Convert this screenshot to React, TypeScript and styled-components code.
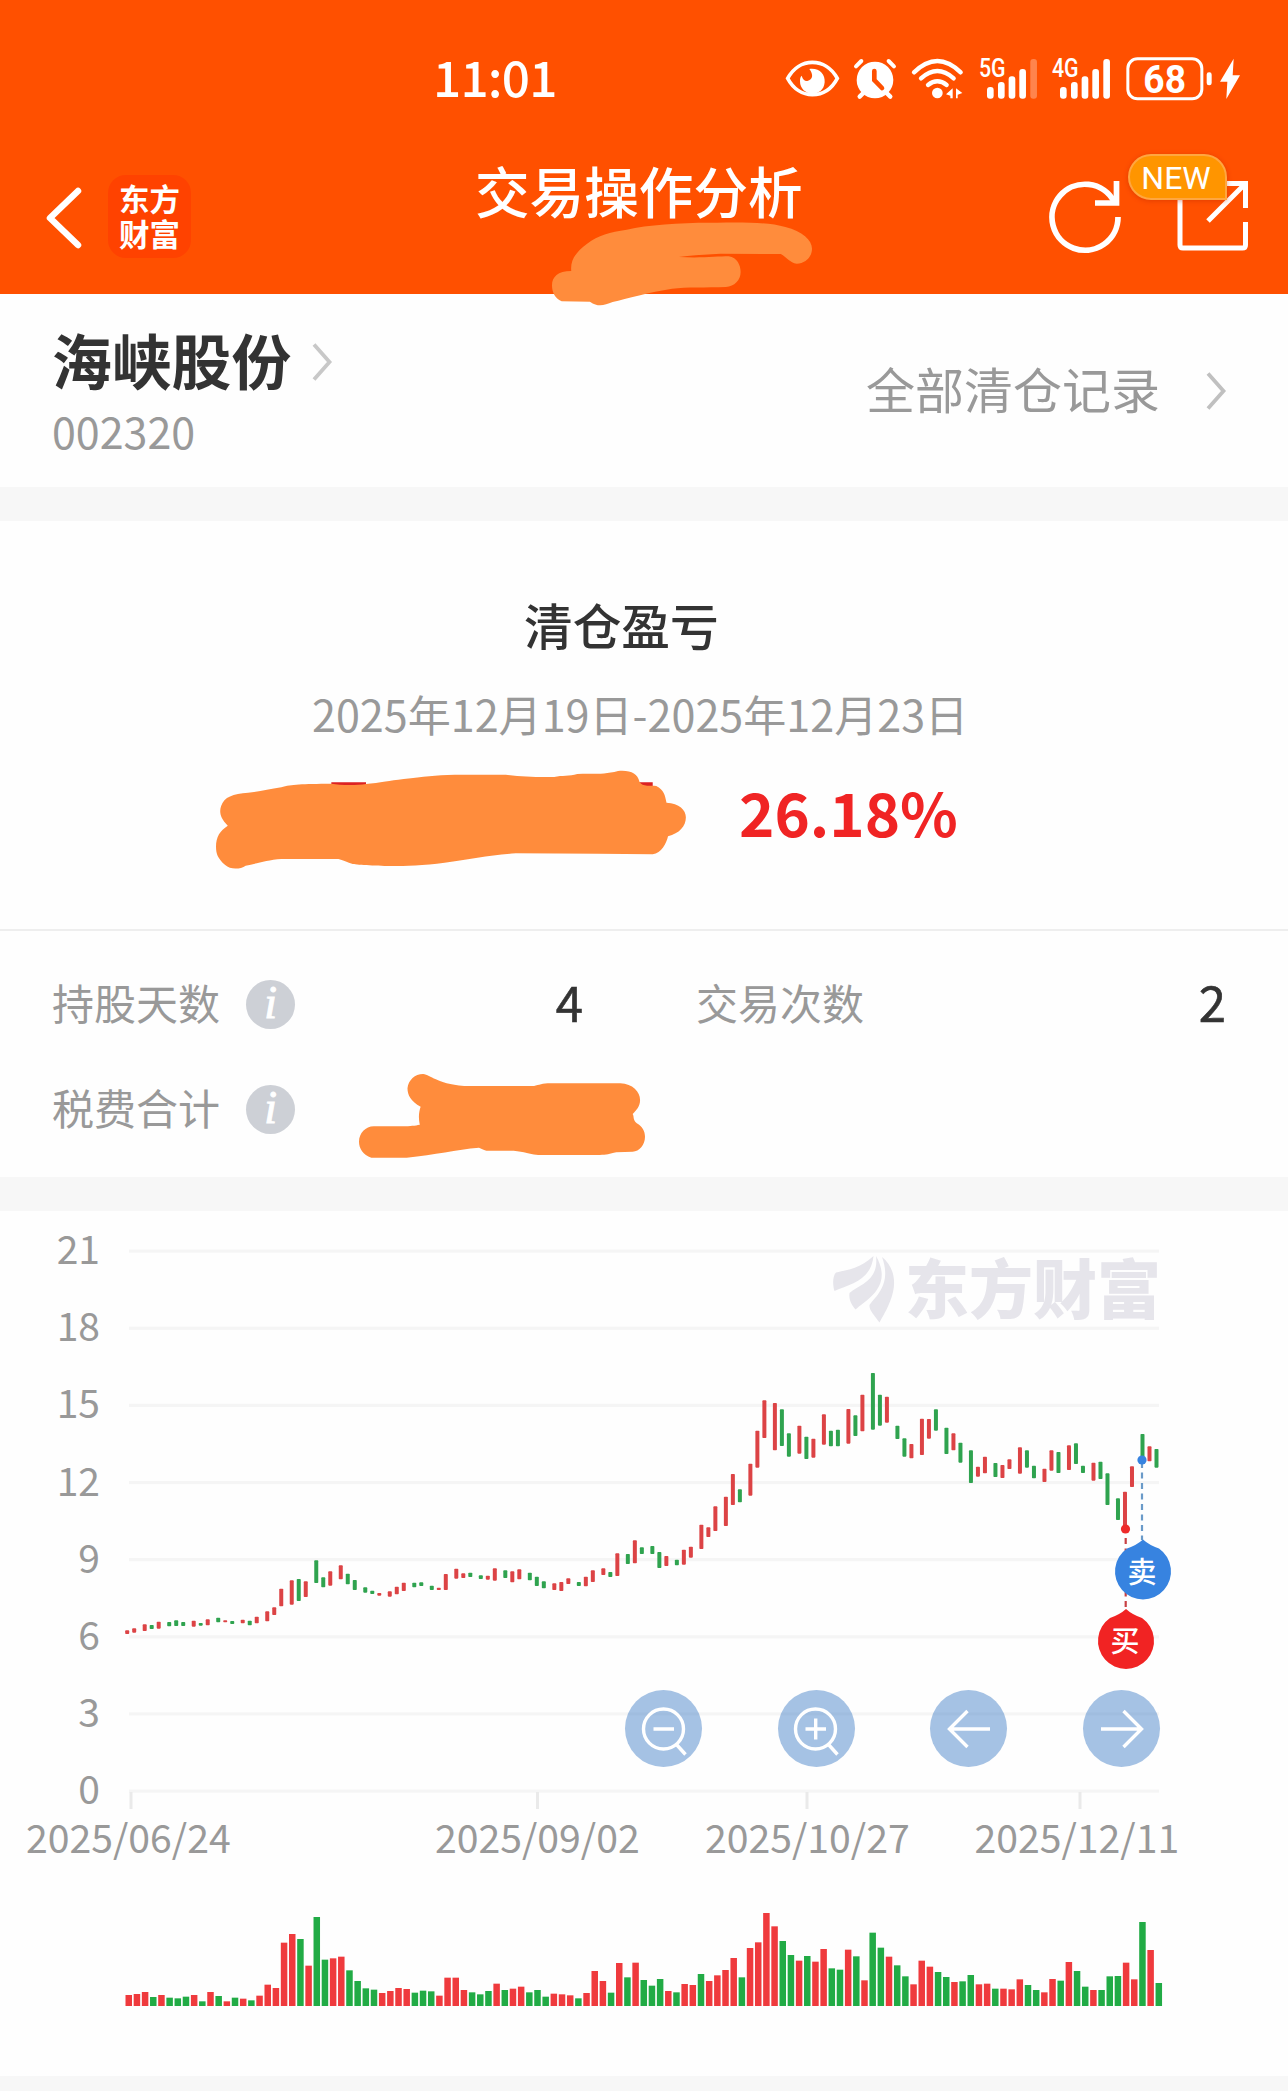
import React from 'react';
import styled, { createGlobalStyle } from 'styled-components';

const SANS = '"Noto Sans CJK SC", "Noto Sans", sans-serif';
const RED = '#dc4345';
const GREEN = '#2fa34f';
const MARKER = '#ff8c3c';

const Global = createGlobalStyle`
  body { margin: 0; background: #fff; font-family: ${SANS}; color: #333; }
  * { box-sizing: border-box; }
  svg { display: block; flex: none; overflow: visible; }
`;

const Screen = styled.main`
  width: 1288px;
  height: 2091px;
  display: flex;
  flex-direction: column;
  overflow: hidden;
  background: #fefefe;
`;

const Header = styled.header`
  position: relative;
  height: 294px;
  background: #ff5000;
  color: #fff;
  flex: none;
`;

const StatusBar = styled.div`
  display: flex;
  justify-content: space-between;
  align-items: center;
  height: 157px;
  padding: 0 48px 0 433px;
`;

const Clock = styled.span`
  padding-bottom: 5px;
  font-size: 49.5px;
  font-weight: 500;
  line-height: 60px;
  letter-spacing: -0.8px;
`;

const StatusIcons = styled.div`
  display: flex;
  gap: 15.6px;
  fill: #fff;
`;

const Battery = styled.div`
  display: flex;
  gap: 8px;
`;

const NavBar = styled.div`
  display: grid;
  grid-template-columns: 475px 1fr 240px;
`;

const NavLeft = styled.div`
  display: flex;
  align-items: center;
  height: 119px;
  padding-left: 45px;
  gap: 25px;
`;

const BrandTile = styled.div`
  display: flex;
  flex-direction: column;
  justify-content: center;
  align-items: center;
  width: 83px;
  height: 83px;
  padding-bottom: 2px;
  border-radius: 18px;
  background: #ff4200;
  font-size: 30.5px;
  font-weight: 700;
  line-height: 34.6px;
`;

const NavTitle = styled.h1`
  margin: -3px 0 0;
  font-size: 54.6px;
  font-weight: 500;
  line-height: 72px;
  white-space: nowrap;
`;

const NavRight = styled.div`
  display: flex;
  gap: 56px;
  padding-top: 23px;
  padding-left: 1px;
`;

const ShareButton = styled.div`
  position: relative;
`;

const NewBadge = styled.span`
  position: absolute;
  left: -50px;
  top: -26px;
  width: 99px;
  height: 46px;
  border-radius: 23px 23px 0 23px;
  border: 2px solid #ffa640;
  background: #ff9500;
  box-shadow: 0 1px 5px rgba(190, 40, 0, 0.45);
  font: 400 32px/44px Roboto, sans-serif;
  text-align: center;
  padding-right: 3px;
`;

const Marker = styled.svg<{ $x: number; $y: number }>`
  position: absolute;
  left: ${(p) => p.$x}px;
  top: ${(p) => p.$y}px;
  fill: ${MARKER};
`;

const Divider = styled.div`
  height: 34.5px;
  background: #f7f7f7;
  flex: none;
`;

const StockBar = styled.section`
  display: flex;
  justify-content: space-between;
  height: 192.5px;
  padding: 33px 62px 0 52px;
  flex: none;
`;

const StockHeading = styled.div`
  display: flex;
  align-items: center;
  gap: 21px;
  height: 70px;
`;

const StockName = styled.h2`
  margin: 0;
  padding-bottom: 6px;
  font-size: 59.8px;
  font-weight: 700;
  line-height: 64px;
`;

const StockCode = styled.div`
  margin-top: 5px;
  font-size: 43px;
  line-height: 56px;
  color: #999;
`;

const AllRecords = styled.div`
  display: flex;
  align-items: center;
  gap: 46px;
  height: 60px;
  margin-top: 34px;
  font-size: 49px;
  color: #999;
`;

const RecordsLabel = styled.span`
  padding-bottom: 7px;
`;

const Summary = styled.section`
  position: relative;
  height: 410px;
  padding-top: 68px;
  border-bottom: 2px solid #eee;
  flex: none;
`;

const SummaryTitle = styled.h3`
  margin: 0;
  padding-left: 524px;
  font-size: 48.7px;
  font-weight: 500;
  line-height: 70px;
`;

const Period = styled.div`
  padding-left: 312px;
  margin-top: 24px;
  font-size: 43.1px;
  line-height: 60px;
  color: #999;
`;

const Percent = styled.div`
  padding-left: 739px;
  margin-top: 30px;
  font-size: 60px;
  font-weight: 700;
  line-height: 76px;
  color: #f02424;
`;

const Stats = styled.section`
  position: relative;
  display: grid;
  grid-template-columns: 531px 530px;
  column-gap: 113px;
  grid-auto-rows: 105px;
  height: 245.5px;
  padding: 20.5px 0 0 52px;
  flex: none;
`;

const Stat = styled.div`
  display: flex;
  align-items: center;
`;

const StatLabel = styled.span`
  padding-bottom: 6px;
  font-size: 42px;
  color: #999;
`;

const InfoDot = styled.span`
  width: 49px;
  height: 49px;
  margin-left: 26px;
  border-radius: 50%;
  background: #cdd0d6;
  color: #fff;
  font: italic 400 46px/46px "Liberation Serif", serif;
  -webkit-text-stroke: 1px #fff;
  text-align: center;
`;

const StatValue = styled.span`
  margin-left: auto;
  padding-bottom: 6px;
  font-size: 49px;
  font-weight: 400;
  -webkit-text-stroke: 0.6px #333;
  line-height: 60px;
`;

const ChartPanel = styled.section`
  position: relative;
  height: 865px;
  flex: none;
`;

const ChartControls = styled.div`
  position: absolute;
  left: 625px;
  top: 479px;
  display: flex;
  gap: 75.7px;
`;

const RoundButton = styled.button`
  display: flex;
  align-items: center;
  justify-content: center;
  width: 77px;
  height: 77px;
  padding: 0;
  border: 0;
  border-radius: 50%;
  background: rgba(75, 133, 202, 0.5);
`;

const Footer = styled.div`
  flex: 1;
  background: #f7f7f7;
`;

/* Each token is "top-bottom+direction" in thirds of a pixel below the band origin. */
const FIRST_BAND = `391-402r 385-398r 373-393r 375-387g 365-386r 366-379g 361-378g 366-378g 362-380r 369-377g
358-376r 353-367g 361-367r 363-372g 359-370r 362-376g 350-370r 334-364r 322-345r 266-319r 241-314r 237-303g
244-291r 181-249g 232-262g 214-257r 196-238r 221-253g 240-270g 262-278g 272-282g 279-287r 274-290r 260-283r
248-273r 248-262g 247-258g 257-270g 263-270r 222-270r 206-236r 220-234r 218-231g 226-237g 227-239r 205-242r
211-234g 214-247r 208-238r 218-241g 230-258g 244-265g 250-270r 246-273r 235-252r 246-258g 230-259r 211-246r
205-225r 216-231g 160-228r 162-192g 121-190r 142-162g 138-162g`;

const SECOND_BAND = `636-684g 648-678r 659-676g 629-674r 620-653r 554-627r 562-591r 499-573r 470-558r 402-495r 448-487g
371-467r 272-383r 181-294r 189-331r 208-318g 280-350g 257-341r 290-357g 296-353r 223-314r 272-319g 269-319g
207-311r 226-288g 164-274r 99-269g 164-257g 170-248r 257-297g 295-350g 312-355r 236-345r 237-296r 208-272g
263-342g 280-331r 308-368g 331-429g 380-410r 350-400r 369-411g 375-414r 358-387r 322-401r 331-383g 377-415g
386-426r 331-392r 336-399g 316-390r 310-372g 377-399g 368-422r 365-417g 400-495g 475-540g 455-560r 379-441r
282-355g 319-364r 327-383g`;

const VOLUME = `285r 282r 276r 291g 285r 293g 295g 290g 285r 304g 276r 288g 304r 293g 296r 301g 287r 254r 264r 128r
102r 117g 197r 51g 179g 175r 170r 211g 243g 265g 269g 279r 273r 264r 267r 278g 272g 274g 287r 233r 233r 270r 277g
283g 273g 251r 270g 266r 260r 277g 270g 290g 281r 283r 286r 295g 279r 213r 243r 278g 189r 232g 188r 240g 257g 237g
273r 277g 252r 255r 222g 243r 226r 210r 174r 232g 144r 127r 39r 79r 123g 165g 182r 168g 185r 147r 205g 209g 149r
169g 241r 98g 143g 170r 196g 229g 253r 182r 200r 216g 231g 246r 244g 225g 253r 251r 266g 266r 268r 238r 255g 270g
277r 237r 242g 186r 213g 260g 270r 270g 229g 228g 188r 238r 66g 150r 249g`;

const parseBand = (source: string, origin: number) =>
  source.split(/\s+/).map((token) => {
    const [top, bottom] = token.slice(0, -1).split('-').map(Number);
    return { top: origin + top / 3, bottom: origin + bottom / 3, up: token.endsWith('r') };
  });

const candles = [...parseBand(FIRST_BAND, 1500), ...parseBand(SECOND_BAND, 1340)];
const volumes = VOLUME.split(/\s+/).map((token) => ({
  top: 1900 + parseInt(token, 10) / 3,
  up: token.endsWith('r'),
}));

const gridY = (i: number) => 1251 + i * 77.14;

/* Candles snap to whole columns, seven columns for every three trading days. */
const candleColumn = (i: number) => (i < 37 ? Math.round((7 * i) / 3) : Math.ceil((7 * i) / 3));

const Pin = ({ x, y, color, label }: { x: number; y: number; color: string; label: string }) => (
  <g>
    <path
      fill={color}
      d={`M${x} ${y - 31.5} Q${x + 6} ${y - 26} ${x + 16} ${y - 22.5} A28 28 0 1 1 ${x - 16} ${y - 22.5} Q${x - 6} ${y - 26} ${x} ${y - 31.5}Z`}
    />
    <text x={x - 1} y={y + 11.5} fontSize="29" fontWeight="500" fill="#fff" textAnchor="middle">{label}</text>
  </g>
);

const Chart = () => (
  <svg width="1288" height="865" viewBox="0 1211 1288 865">
    {[21, 18, 15, 12, 9, 6, 3, 0].map((value, i) => (
      <g key={value}>
        <rect x="129" y={gridY(i) - 1.5} width="1030" height="3.2" fill="#f5f5f5" />
        <text x="100" y={gridY(i) + 13.2} textAnchor="end" fontSize="39" fill="#999">{value}</text>
      </g>
    ))}
    {[131, 537.5, 807, 1080].map((x) => (
      <rect key={x} x={x - 1.5} y="1792" width="3" height="17" fill="#eaeaea" />
    ))}
    <g fontSize="39.2" fill="#999">
      <text x="26" y="1852.5">2025/06/24</text>
      <text x="435" y="1852.5">2025/09/02</text>
      <text x="705" y="1852.5">2025/10/27</text>
      <text x="974.5" y="1852.5">2025/12/11</text>
    </g>
    <g fill="#e6e5eb">
      <path d="M873.5 1256 C860 1269 846 1270 836 1272.500 C832.500 1276 832.500 1285 834.500 1291 C850 1284 871 1281 873.500 1256Z" />
      <path d="M876 1256 C879 1281 860 1284 849.500 1293 C848.500 1300 852 1305 855.500 1309.500 C868 1299 893 1286 876 1256Z" />
      <path d="M882 1257 C893 1266 896 1279 893 1292 C890 1305 884 1314 879.500 1322.500 C874 1315 869 1310 869.500 1305 C876 1296 892 1284 882 1257Z" />
      <text x="905" y="1313" fontSize="64" fontWeight="900">东方财富</text>
    </g>
    {candles.map((c, i) => (
      <rect
        key={i}
        x={125.2 + 3.501 * candleColumn(i)}
        y={c.top}
        width="4"
        height={c.bottom - c.top}
        rx="0.8"
        fill={c.up ? RED : GREEN}
      />
    ))}
    <line x1="1142" x2="1142" y1="1462" y2="1540" stroke="#6a9ac8" strokeWidth="2.200" strokeDasharray="6 4.500" />
    <line x1="1125.700" x2="1125.700" y1="1538" y2="1612" stroke="#c84044" strokeWidth="2.200" strokeDasharray="6 4.500" />
    <circle cx="1142" cy="1460" r="4.6" fill="#3783e0" />
    <circle cx="1125.500" cy="1529" r="4.6" fill="#ee2a2a" />
    <Pin x={1143} y={1571} color="#3783e0" label="卖" />
    <Pin x={1126} y={1640.500} color="#f12323" label="买" />
    {volumes.map((v, i) => (
      <rect key={i} x={125.500 + i * 8.175} y={v.top} width="6.5" height={2006 - v.top} fill={v.up ? '#ef3a3d' : '#21ab45'} />
    ))}
  </svg>
);

const Chevron = ({ w, h, stroke }: { w: number; h: number; stroke: string }) => (
  <svg width={w} height={h} fill="none" stroke={stroke} strokeWidth="3.8">
    <path d={`M2 1.500 L${w - 2.500} ${h / 2} L2 ${h - 1.500}`} />
  </svg>
);

const Signal = ({ label, weak }: { label: string; weak?: boolean }) => (
  <svg width="58.300" height="44" viewBox="0 50 175 132">
    <text x="0" y="111" fontSize="76" fontWeight="500" fontFamily="Roboto, sans-serif" textLength="80" lengthAdjust="spacingAndGlyphs">{label}</text>
    <rect x="24" y="140" width="20" height="35" rx="9" />
    <rect x="57" y="125" width="20" height="50" rx="9" />
    <rect x="89" y="108" width="20" height="67" rx="9" />
    <rect x="121" y="86" width="20" height="89" rx="9" />
    <rect x="154" y="56" width="20" height="119" rx="9" opacity={weak ? 0.3 : 1} />
  </svg>
);

export default function App() {
  return (
    <>
      <Global />
      <Screen>
        <Header>
          <StatusBar>
            <Clock>11:01</Clock>
            <StatusIcons>
              <svg width="53" height="44" viewBox="18 50 159 132">
                <path d="M23 114 C40 83 68 66 97 66 C127 66 155 83 172 114 C155 146 127 163 97 163 C68 163 40 146 23 114Z" fill="none" stroke="#fff" strokeWidth="11" />
                <path d="M88 86 C118 82 136 102 134 126 C132 150 115 160 97 160 C77 160 60 145 60 123 C60 115 61 110 65 106 C69 118 74 123 82 122 C99 118 101 103 88 86Z" />
              </svg>
              <svg width="42.300" height="44" viewBox="225 50 127 132">
                <path d="M231 78 L247 62 M345 78 L329 62" stroke="#fff" strokeWidth="12" strokeLinecap="round" />
                <path d="M256 155 L242 169 M320 155 L334 169" stroke="#fff" strokeWidth="13" strokeLinecap="round" />
                <circle cx="288" cy="119" r="55" />
                <path d="M286 92 V119 L309 143" fill="none" stroke="#ff5000" strokeWidth="14" strokeLinecap="round" />
              </svg>
              <svg width="50.700" height="44" viewBox="398 50 152 132">
                <g fill="none" stroke="#fff" strokeWidth="13" strokeLinecap="round">
                  <path d="M404 96 Q474 28 544 96" />
                  <path d="M425 114 Q474 70 523 114" />
                  <path d="M446 134 Q474 112 502 134" />
                </g>
                <circle cx="474" cy="158" r="16" />
                <path d="M520 144 V174 H513 V166 L500 162Z M530 144 L549 158 L535 163 V174 H530Z" />
              </svg>
              <Signal label="5G" weak />
              <Signal label="4G" />
              <Battery>
                <svg width="85.700" height="44" viewBox="1040 50 257 132">
                  <rect x="1045.500" y="55.500" width="222" height="120" rx="29" fill="none" stroke="#fff" strokeWidth="9" />
                  <rect x="1282" y="96" width="15" height="39" rx="7" />
                  <text x="1092" y="157" fontSize="117" fontWeight="700" fontFamily="Roboto, sans-serif" textLength="128" lengthAdjust="spacingAndGlyphs">68</text>
                </svg>
                <svg width="20" height="44" viewBox="1320 50 60 132">
                  <path d="M1361 55 L1320 124 H1342 L1339 176 L1380 105 H1358Z" />
                </svg>
              </Battery>
            </StatusIcons>
          </StatusBar>
          <NavBar>
            <NavLeft>
              <svg width="38" height="62" fill="none" stroke="#fff" strokeWidth="6.500" strokeLinecap="round" strokeLinejoin="round">
                <path d="M33 5 L5 32 L33 59" />
              </svg>
              <BrandTile>
                <span>东方</span>
                <span>财富</span>
              </BrandTile>
            </NavLeft>
            <NavTitle>交易操作分析</NavTitle>
            <NavRight>
              <svg width="73" height="73" fill="none" stroke="#fff" strokeWidth="5.700">
                <path d="M69 37 A33 33 0 1 1 65 21.500" />
                <path d="M67.500 1 V23 H46" />
              </svg>
              <ShareButton>
                <svg width="72" height="73" fill="none" stroke="#fff" strokeWidth="5">
                  <path d="M2 15 V65 Q2 68 5 68 H64.500 Q67.500 68 67.500 65 V42" />
                  <path d="M43 3.500 H67.500 V28 M67 4 L30 41" />
                </svg>
                <NewBadge>NEW</NewBadge>
              </ShareButton>
            </NavRight>
          </NavBar>
          <Marker $x={552} $y={221.7} width="260" height="84.300" viewBox="268 575 459 253" preserveAspectRatio="none">
            <path d="M302 722 C300 690 310 665 330 640 C350 615 370 605 400 598 C440 582 500 576 560 577 C610 576 650 576 680 590 C710 602 727 630 727 655 C727 680 715 700 700 700 C688 698 682 680 672 671 L565 670 C540 672 515 675 492 680 C530 684 560 678 580 678 C595 682 601 705 601 725 C601 750 590 768 575 770 C540 772 505 770 480 775 C440 785 400 805 375 815 C360 825 350 832 335 814 L285 813 C273 805 268 785 268 765 C268 740 278 722 302 722Z" />
          </Marker>
        </Header>

        <StockBar>
          <div>
            <StockHeading>
              <StockName>海峡股份</StockName>
              <Chevron w={20} h={38} stroke="#c8c8c8" />
            </StockHeading>
            <StockCode>002320</StockCode>
          </div>
          <AllRecords>
            <RecordsLabel>全部清仓记录</RecordsLabel>
            <Chevron w={20} h={38} stroke="#c0c0c0" />
          </AllRecords>
        </StockBar>
        <Divider />

        <Summary>
          <SummaryTitle>清仓盈亏</SummaryTitle>
          <Period>2025年12月19日-2025年12月23日</Period>
          <Percent>26.18%</Percent>
          <Marker $x={215.3} $y={249} width="471.400" height="99.300" viewBox="30 630 924 298" preserveAspectRatio="none">
            <path fill="#dc2222" d="M258 667 H326 V676 H258Z M860 667 H888 V684 H860Z" />
            <path d="M55 797 C40 775 38 755 42 738 C48 710 65 702 95 698 C115 695 135 688 160 682 C180 672 200 672 258 671 C275 676 310 676 326 672 L340 670 C355 668 370 662 400 657 C440 650 460 645 500 644 L600 644 C630 650 660 652 695 651 C710 645 725 650 740 642 C770 640 790 645 820 633 C845 630 858 640 862 665 C868 682 885 675 895 678 C910 690 912 705 915 728 C940 730 953 750 953 772 C953 800 940 820 918 829 C915 850 905 880 888 883 L780 881 L620 880 C570 885 530 898 480 908 C440 917 400 918 380 918 C350 918 310 915 300 912 C290 908 280 900 272 897 L160 897 C130 900 110 912 90 917 C80 928 60 930 50 915 C35 895 32 880 32 860 C32 830 40 812 55 797Z" />
          </Marker>
        </Summary>

        <Stats>
          <Stat>
            <StatLabel>持股天数</StatLabel>
            <InfoDot>i</InfoDot>
            <StatValue>4</StatValue>
          </Stat>
          <Stat>
            <StatLabel>交易次数</StatLabel>
            <StatValue>2</StatValue>
          </Stat>
          <Stat>
            <StatLabel>税费合计</StatLabel>
            <InfoDot>i</InfoDot>
          </Stat>
          <Marker $x={359} $y={143} width="286" height="84" viewBox="437 462 348 252" preserveAspectRatio="none">
            <path d="M512 560 C500 545 496 525 496 505 C497 480 505 462 515 462 C525 465 530 490 565 498 L650 498 C656 495 660 490 670 490 L755 490 C770 492 779 515 779 540 C779 560 774 572 770 582 C772 590 770 600 775 610 C782 620 785 635 785 650 C785 675 778 694 770 695 L750 697 C742 702 738 705 730 705 L655 705 C640 700 635 692 620 692 L592 692 C588 690 586 685 583 683 C555 688 530 705 495 713 L452 713 C442 705 437 685 437 665 C437 640 445 619 455 619 L490 619 C500 618 505 617 511 614 C509 590 510 575 512 560Z" />
          </Marker>
        </Stats>
        <Divider />

        <ChartPanel>
          <Chart />
          <ChartControls>
            <RoundButton aria-label="缩小">
              <svg width="46" height="48" fill="none" stroke="#fff" strokeWidth="3.400">
                <circle cx="22.500" cy="24" r="20" />
                <path d="M12.500 24 H33 M35 39 L44.500 49.500" />
              </svg>
            </RoundButton>
            <RoundButton aria-label="放大">
              <svg width="46" height="48" fill="none" stroke="#fff" strokeWidth="3.400">
                <circle cx="22.500" cy="24" r="20" />
                <path d="M12.500 24 H33 M22.700 13.500 V34.500 M35 39 L44.500 49.500" />
              </svg>
            </RoundButton>
            <RoundButton aria-label="向左">
              <svg width="44" height="40" fill="none" stroke="#fff" strokeWidth="3.400">
                <path d="M43 20 H2 M20.500 2 L2.500 20 L20.500 38" />
              </svg>
            </RoundButton>
            <RoundButton aria-label="向右">
              <svg width="44" height="40" fill="none" stroke="#fff" strokeWidth="3.400">
                <path d="M1 20 H42 M23.500 2 L41.500 20 L23.500 38" />
              </svg>
            </RoundButton>
          </ChartControls>
        </ChartPanel>
        <Footer />
      </Screen>
    </>
  );
}
